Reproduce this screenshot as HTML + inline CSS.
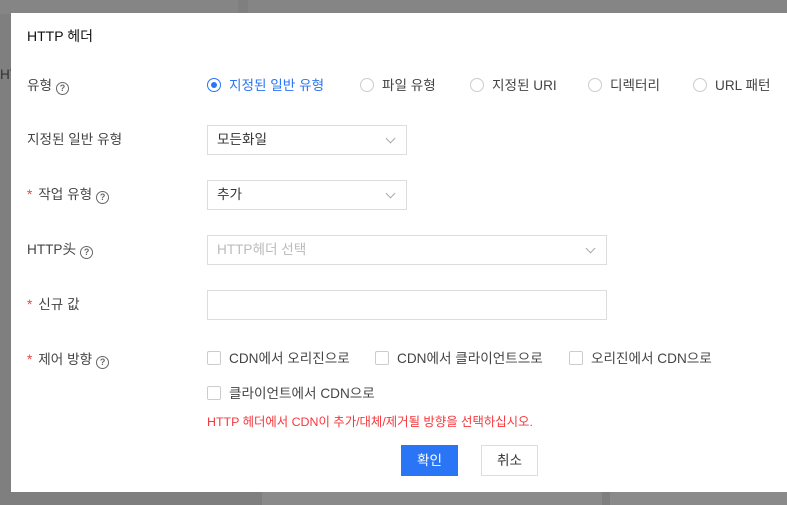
<!DOCTYPE html>
<html><head><meta charset="utf-8"><style>
*{box-sizing:border-box;margin:0;padding:0}
body{width:787px;height:505px;overflow:hidden;background:#7f7f7f;font-family:"Liberation Sans","Noto Sans CJK KR",sans-serif;font-size:13.6px;color:#444;position:relative}
.bg{position:absolute;background:#8a8a8a}
.modal{position:absolute;left:11px;top:13px;width:790px;height:479px;background:#fff}
.a{position:absolute;white-space:nowrap;line-height:18px}
.q{display:inline-block;width:13px;height:13px;border:1.3px solid #666;border-radius:50%;font-size:9px;line-height:11px;text-align:center;vertical-align:-1px;margin-left:4px;color:#666;font-weight:bold}
.req{color:#e54545;margin-right:6px}
.radio{display:inline-block;width:14px;height:14px;border:1px solid #ccc;border-radius:50%;vertical-align:-2px;margin-right:8px;position:relative}
.radio.on{border-color:#2a74f6}
.radio.on:after{content:"";position:absolute;left:3px;top:3px;width:6px;height:6px;border-radius:50%;background:#2a74f6}
.sel{position:absolute;border:1px solid #ddd;height:30px;padding-left:9px;line-height:28px;color:#333}
.sel.c:after{content:"";position:absolute;right:12px;top:9px;width:6px;height:6px;border-right:1px solid #aaa;border-bottom:1px solid #aaa;transform:rotate(45deg)}
.cb{display:inline-block;width:14px;height:14px;border:1px solid #ccc;border-radius:2px;vertical-align:-2px;margin-right:8px}
</style></head><body>
<div class="bg" style="left:0;top:0;width:238px;height:14px;background:#858585"></div>
<div class="bg" style="left:248px;top:0;width:540px;height:14px;background:#858585"></div>
<div class="a" style="left:0;top:66px;color:#333">HT</div>
<div class="a" style="left:262px;top:492px;width:340px;height:13px;background:#8a8a8a"></div>
<div class="a" style="left:610px;top:492px;width:177px;height:13px;background:#8a8a8a"></div>
<div class="modal">
<div class="a" style="left:16px;top:14px;font-size:14px;color:#111">HTTP 헤더</div>
<div class="a" style="left:16px;top:64px">유형<span class="q">?</span></div>
<div class="a" style="left:196px;top:64px;color:#2a74f6"><span class="radio on"></span>지정된 일반 유형</div>
<div class="a" style="left:349px;top:64px"><span class="radio"></span>파일 유형</div>
<div class="a" style="left:459px;top:64px"><span class="radio"></span>지정된 URI</div>
<div class="a" style="left:577px;top:64px"><span class="radio"></span>디렉터리</div>
<div class="a" style="left:682px;top:64px"><span class="radio"></span>URL 패턴</div>
<div class="a" style="left:16px;top:118px">지정된 일반 유형</div>
<div class="sel c" style="left:196px;top:112px;width:200px">모든화일</div>
<div class="a" style="left:16px;top:173px"><span class="req">*</span>작업 유형<span class="q">?</span></div>
<div class="sel c" style="left:196px;top:167px;width:200px">추가</div>
<div class="a" style="left:16px;top:228px">HTTP头<span class="q">?</span></div>
<div class="sel c" style="left:196px;top:222px;width:400px;color:#bbb">HTTP헤더 선택</div>
<div class="a" style="left:16px;top:283px"><span class="req">*</span>신규 값</div>
<div class="sel" style="left:196px;top:277px;width:400px"></div>
<div class="a" style="left:16px;top:338px"><span class="req">*</span>제어 방향<span class="q">?</span></div>
<div class="a" style="left:196px;top:337px"><span class="cb"></span>CDN에서 오리진으로</div>
<div class="a" style="left:364px;top:337px"><span class="cb"></span>CDN에서 클라이언트으로</div>
<div class="a" style="left:558px;top:337px"><span class="cb"></span>오리진에서 CDN으로</div>
<div class="a" style="left:196px;top:372px"><span class="cb"></span>클라이언트에서 CDN으로</div>
<div class="a" style="left:196px;top:400px;color:#f5383d;font-size:12.4px">HTTP 헤더에서 CDN이 추가/대체/제거될 방향을 선택하십시오.</div>
<div class="a" style="left:390px;top:432px;width:57px;height:31px;background:#2a74f6;color:#fff;text-align:center;line-height:31px">확인</div>
<div class="a" style="left:470px;top:432px;width:57px;height:31px;border:1px solid #ddd;color:#333;text-align:center;line-height:29px">취소</div>
</div>
</body></html>
